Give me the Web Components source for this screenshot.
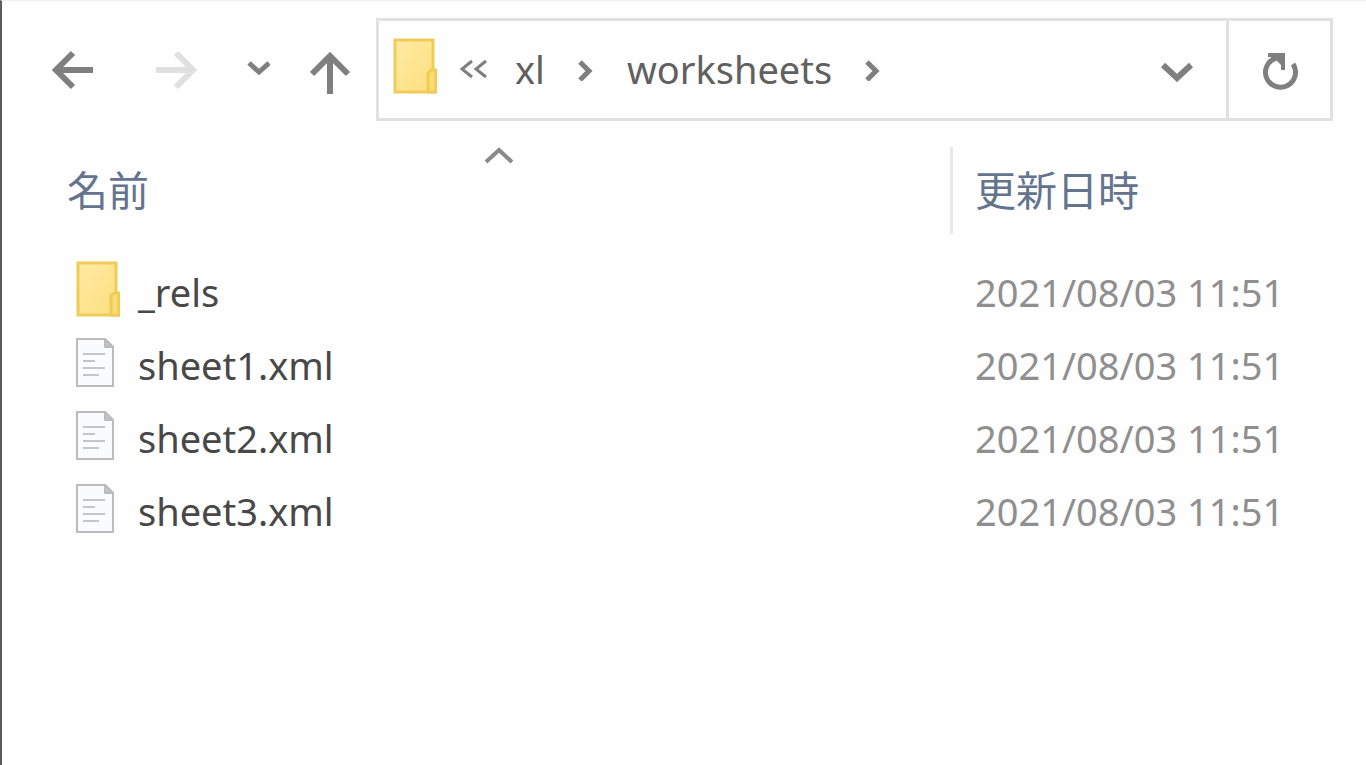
<!DOCTYPE html>
<html lang="ja">
<head>
<meta charset="utf-8">
<title>worksheets</title>
<style>
    html, body {
        margin: 0;
        min-height: 100%;
    }

    body {
        --line: #e1e1e1;
        --icon: #7f7f7f;
        --text: #484848;
        --date: #8f8f8f;
        --head: #64748e;
        background-color: #fefefe;
        color: var(--text);
        font-family: "Noto Sans", "Noto Sans CJK JP", sans-serif;
        font-size: 38px;
        line-height: 48px;
    }
</style>
</head>
<body>

<explorer-window>
    <nav-bar slot="bar">
        <address-bar>
            <path-crumb>xl</path-crumb>
            <path-crumb>worksheets</path-crumb>
        </address-bar>
    </nav-bar>
    <file-list></file-list>
</explorer-window>

<script>
const files = [
    { type: 'folder', name: '_rels', date: '2021/08/03 11:51' },
    { type: 'file', name: 'sheet1.xml', date: '2021/08/03 11:51' },
    { type: 'file', name: 'sheet2.xml', date: '2021/08/03 11:51' },
    { type: 'file', name: 'sheet3.xml', date: '2021/08/03 11:51' }
];

const buttonStyle = `
    button {
        display: flex;
        align-items: center;
        justify-content: center;
        padding: 0;
        border: 0;
        background: none;
        color: inherit;
        font: inherit;
    }

    svg {
        display: block;
        flex: none;
    }
`;

function attach(element, html) {
    const template = document.createElement('template');
    template.innerHTML = html;
    element.attachShadow({ mode: 'open' }).appendChild(template.content.cloneNode(true));
}

// Window frame
class ExplorerWindow extends HTMLElement {
    constructor() {
        super();
        attach(this, `
            <style>
                :host {
                    display: block;
                    box-sizing: border-box;
                    min-height: 100vh;
                    border-left: 2px solid #5c5c5c;
                    border-top: 1px solid #f0f0f0;
                }
            </style>
            <slot name="bar"></slot>
            <main><slot></slot></main>
        `);
    }
}

// Back, forward, recent, up and the address
class NavBar extends HTMLElement {
    constructor() {
        super();
        attach(this, `
            <style>
                ${buttonStyle}

                :host {
                    display: block;
                    color: var(--icon);
                }

                nav {
                    display: flex;
                    align-items: stretch;
                    padding: 17px 33px 0 18px;
                }

                button {
                    flex: none;
                    width: 104px;
                }

                .recent {
                    width: 60px;
                }

                .up {
                    width: 88px;
                }

                button:disabled {
                    color: #e0e0e0;
                }

                slot {
                    display: block;
                    flex: 1;
                }
            </style>
            <nav>
                <button type="button" aria-label="戻る">
                    <svg width="44" height="44" viewBox="0 0 44 44" fill="none" stroke="currentColor" stroke-width="6">
                        <path d="M43 22H6M23 5L6 22L23 39"/>
                    </svg>
                </button>
                <button type="button" aria-label="進む" disabled>
                    <svg width="44" height="44" viewBox="0 0 44 44" fill="none" stroke="currentColor" stroke-width="6">
                        <path d="M2 22H39M22 5L39 22L22 39"/>
                    </svg>
                </button>
                <button type="button" class="recent" aria-label="最近表示した場所">
                    <svg width="24" height="20" viewBox="0 0 24 20" fill="none" stroke="currentColor" stroke-width="5">
                        <path d="M3 3L13 12L23 3"/>
                    </svg>
                </button>
                <button type="button" class="up" aria-label="上へ">
                    <svg width="44" height="48" viewBox="0 0 44 48" fill="none" stroke="currentColor" stroke-width="6">
                        <path d="M20 48V10M2 28L20 10L38 28"/>
                    </svg>
                </button>
                <slot></slot>
            </nav>
        `);
    }
}

class AddressBar extends HTMLElement {
    constructor() {
        super();
        attach(this, `
            <style>
                ${buttonStyle}

                :host {
                    display: flex;
                    box-sizing: border-box;
                    height: 103px;
                    border: 3px solid var(--line);
                }

                .path {
                    display: flex;
                    flex: 1;
                    align-items: center;
                    padding: 0 0 2px 14px;
                }

                .more {
                    padding: 0 26px 0 22px;
                }

                .history {
                    width: 98px;
                }

                .refresh {
                    width: 104px;
                    border-left: 3px solid var(--line);
                }
            </style>
            <div class="path">
                <item-icon type="folder"></item-icon>
                <button type="button" class="more" aria-label="上位のフォルダー">
                    <svg width="30" height="22" viewBox="0 0 30 22" fill="none" stroke="currentColor" stroke-width="3">
                        <path d="M13 3L3 11L13 19M27 3L17 11L27 19"/>
                    </svg>
                </button>
                <slot></slot>
            </div>
            <button type="button" class="history" aria-label="以前の場所">
                <svg width="34" height="24" viewBox="0 0 34 24" fill="none" stroke="currentColor" stroke-width="6">
                    <path d="M3 7L17 20L31 7"/>
                </svg>
            </button>
            <button type="button" class="refresh" aria-label="最新の情報に更新">
                <svg width="36" height="40" viewBox="0 0 36 40" fill="none" stroke="currentColor" stroke-width="5">
                    <path d="M14 8A15 15 0 1 0 31 14"/>
                    <path d="M6 5H21V20" stroke-width="4"/>
                    <path d="M8 4H22V18Z" fill="currentColor" stroke="none"/>
                </svg>
            </button>
        `);
    }
}

// One step of the path with the arrow after it
class PathCrumb extends HTMLElement {
    constructor() {
        super();
        attach(this, `
            <style>
                ${buttonStyle}

                :host {
                    display: flex;
                    align-items: center;
                    color: #606060;
                }

                svg {
                    margin: 0 32px;
                    color: var(--icon);
                }
            </style>
            <button type="button"><slot></slot></button>
            <svg width="18" height="24" viewBox="0 0 18 24" fill="none" stroke="currentColor" stroke-width="5">
                <path d="M3 5L12 14L3 23"/>
            </svg>
        `);
    }
}

class ItemIcon extends HTMLElement {
    constructor() {
        super();
        attach(this, `
            <style>
                :host {
                    display: block;
                    flex: none;
                    width: 44px;
                    height: 64px;
                }

                svg {
                    display: block;
                }
            </style>
            <div></div>
        `);
    }

    connectedCallback() {
        const folder = `
            <svg width="44" height="64" viewBox="0 0 44 64" stroke="#efcb59" stroke-width="3">
                <defs>
                    <linearGradient id="paper" x1="0" y1="0" x2="1" y2="1">
                        <stop offset="0" stop-color="#ffeaa3"/>
                        <stop offset="1" stop-color="#fddf7f"/>
                    </linearGradient>
                </defs>
                <path d="M2 3H40V34H43V55H2Z" fill="url(#paper)"/>
                <path d="M35 55V36L38 33H43V55Z" fill="#fbdc72"/>
            </svg>`;
        const file = `
            <svg width="44" height="64" viewBox="0 0 44 64" fill="none" stroke="#bcbcbc" stroke-width="2">
                <path d="M1 6H29L37 14V53H1Z" fill="#fafbfc"/>
                <path d="M29 6V14H37Z" fill="#c4c4c4" stroke-linejoin="round"/>
                <path d="M7 21H29M7 28H19M7 35H29M7 42H23" stroke="#c2c6c9"/>
            </svg>`;
        this.shadowRoot.querySelector('div').innerHTML = this.getAttribute('type') === 'folder' ? folder : file;
    }
}

class FileList extends HTMLElement {
    constructor() {
        super();
        const rows = files.map(file => `
            <tr>
                <td><div class="name"><item-icon type="${file.type}"></item-icon><span>${file.name}</span></div></td>
                <td class="date">${file.date}</td>
            </tr>
        `).join('');

        attach(this, `
            <style>
                ${buttonStyle}

                :host {
                    display: block;
                    padding: 26px 0 0 45px;
                }

                table {
                    width: 100%;
                    border-collapse: collapse;
                    table-layout: fixed;
                }

                th {
                    padding: 0 0 21px;
                    font-weight: 400;
                }

                th:last-child {
                    width: 416px;
                }

                th button {
                    flex-direction: column;
                    align-items: flex-start;
                    justify-content: flex-start;
                    box-sizing: border-box;
                    width: 100%;
                    height: 87px;
                    padding-left: 20px;
                    color: var(--head);
                    font-family: "Noto Sans CJK JP", sans-serif;
                    font-size: 41px;
                }

                th:last-child button {
                    padding-left: 22px;
                    border-left: 3px solid #e8e8e8;
                }

                .sort {
                    display: flex;
                    justify-content: center;
                    align-self: stretch;
                    height: 17px;
                    margin-left: -20px;
                    color: #8a8a8a;
                }

                td {
                    height: 73px;
                    padding: 0;
                    white-space: nowrap;
                }

                .name {
                    display: flex;
                    align-items: center;
                    gap: 18px;
                    padding-left: 29px;
                }

                .date {
                    padding-left: 25px;
                    color: var(--date);
                }
            </style>
            <table>
                <thead>
                    <tr>
                        <th scope="col" aria-sort="ascending">
                            <button type="button">
                                <span class="sort">
                                    <svg width="30" height="18" viewBox="0 0 30 18" fill="none" stroke="currentColor" stroke-width="4">
                                        <path d="M2 15L15 3L28 15"/>
                                    </svg>
                                </span>
                                <span>名前</span>
                            </button>
                        </th>
                        <th scope="col">
                            <button type="button">
                                <span class="sort"></span>
                                <span>更新日時</span>
                            </button>
                        </th>
                    </tr>
                </thead>
                <tbody>${rows}</tbody>
            </table>
        `);
    }
}

customElements.define('item-icon', ItemIcon);
customElements.define('path-crumb', PathCrumb);
customElements.define('address-bar', AddressBar);
customElements.define('nav-bar', NavBar);
customElements.define('file-list', FileList);
customElements.define('explorer-window', ExplorerWindow);
</script>
</body>
</html>
